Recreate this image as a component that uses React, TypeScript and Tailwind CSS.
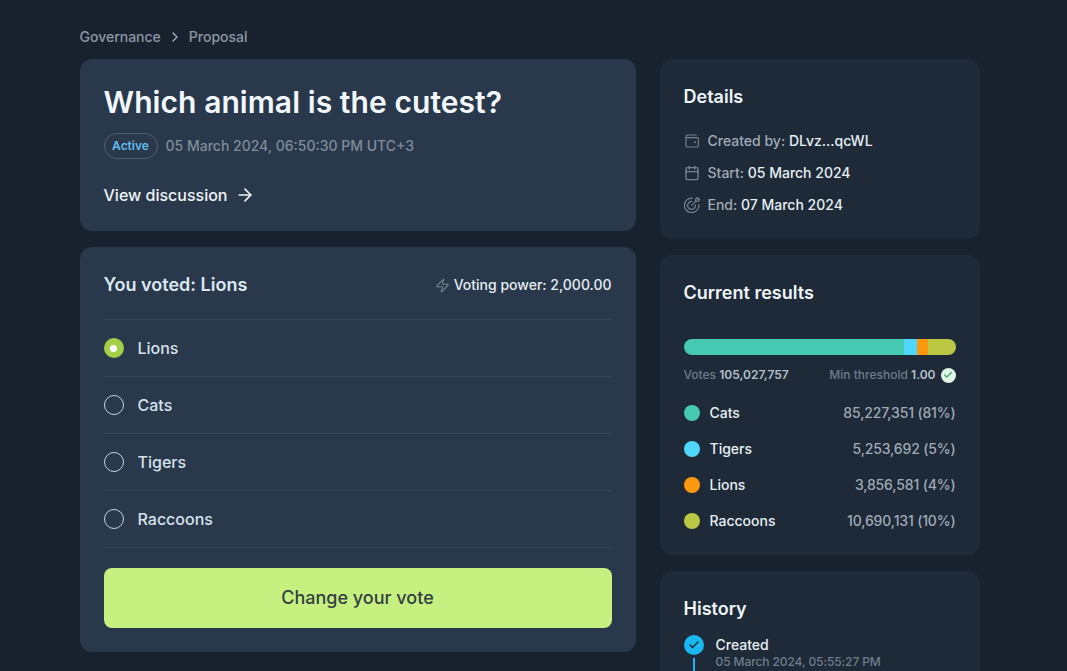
import React from 'react';
import { ArrowRight, Calendar, Check, ChevronRight, Zap } from 'lucide-react';

const options = [
  { name: 'Lions', selected: true },
  { name: 'Cats', selected: false },
  { name: 'Tigers', selected: false },
  { name: 'Raccoons', selected: false },
];

const results = [
  { name: 'Cats', value: '85,227,351 (81%)', dot: 'bg-[#46c9b3]' },
  { name: 'Tigers', value: '5,253,692 (5%)', dot: 'bg-[#4fd6fb]' },
  { name: 'Lions', value: '3,856,581 (4%)', dot: 'bg-[#fb980e]' },
  { name: 'Raccoons', value: '10,690,131 (10%)', dot: 'bg-[#bcc844]' },
];

const WalletIcon = () => (
  <svg width="16" height="16" viewBox="0 0 24 24" fill="none" stroke="currentColor" strokeWidth="1.7" strokeLinecap="round" strokeLinejoin="round">
    <path d="M18.5 3H5.5A2.5 2.5 0 0 0 3 5.5V19a2 2 0 0 0 2 2h15a1.5 1.5 0 0 0 1.5-1.5v-11A1.5 1.5 0 0 0 20 7H3" />
    <circle cx="16.5" cy="14" r="0.6" fill="currentColor" />
  </svg>
);

const TargetIcon = () => (
  <svg width="16" height="16" viewBox="1 1 22 22" fill="none" stroke="currentColor" strokeWidth="1.6" strokeLinecap="round" strokeLinejoin="round">
    <path d="M21.5 11.5A10 10 0 1 1 12.5 2.55" />
    <path d="M16.9 12A5.5 5.5 0 1 1 11.5 7" />
    <path d="M11.5 12.5L17 7" />
    <path d="M17 4v3h3l3-3h-3V1z" />
  </svg>
);

export default function App() {
  return (
    <div className="h-screen overflow-hidden bg-[#18222e] font-['Inter',sans-serif]">
      <div className="ml-[79.5px] w-[900px] pt-[28px]">
        <div className="flex h-[18px] items-center text-sm font-medium text-[#8c98a5]">
          <span>Governance</span>
          <ChevronRight size={16} className="mx-[6px] text-[#a5afb9]" />
          <span>Proposal</span>
        </div>

        <div className="mt-[13px] flex gap-6">
          <div className="flex w-[556px] flex-col gap-4">
            <div className="h-[172px] rounded-xl bg-[#29384a] px-6 pt-[24px]">
              <h1 className="text-[30px] leading-[38px] font-semibold tracking-[0.07px] text-[#f1f7fc]">Which animal is the cutest?</h1>
              <div className="mt-[12px] flex items-center gap-2">
                <span className="flex h-[26px] w-[54px] items-center justify-center rounded-full border border-[#4c6174] text-xs font-semibold text-[#63bdf0]">Active</span>
                <span className="text-sm font-medium text-[#7f8c9a]">05 March 2024, 06:50:30 PM UTC+3</span>
              </div>
              <div className="mt-[24px] flex items-center gap-[7px] text-base font-medium text-[#eef4f9]">
                <span>View discussion</span>
                <ArrowRight size={20} />
              </div>
            </div>

            <div className="h-[405px] rounded-xl bg-[#29384a] px-6">
              <div className="flex h-[73px] items-center justify-between border-b border-[#34465a] pt-[4px]">
                <span className="text-lg font-semibold text-[#dbe8f2]">You voted: Lions</span>
                <span className="flex items-center gap-[4px] text-sm font-medium text-[#e4edf4]">
                  <Zap size={15} className="text-[#6f7d8b]" />
                  Voting power: 2,000.00
                </span>
              </div>
              {options.map((option) => (
                <div key={option.name} className="flex h-[57px] items-center gap-[14px] border-b border-[#34465a]">
                  {option.selected ? (
                    <span className="flex h-5 w-5 items-center justify-center rounded-full bg-[#a3d048]">
                      <span className="h-[7px] w-[7px] rounded-full bg-white" />
                    </span>
                  ) : (
                    <span className="h-5 w-5 rounded-full border border-[#c8d2da]" />
                  )}
                  <span className="text-base font-medium text-[#d5e2ec]">{option.name}</span>
                </div>
              ))}
              <button className="mt-[20px] h-[60px] w-full rounded-lg bg-[#c6f180] text-lg font-medium text-[#333f44]">Change your vote</button>
            </div>
          </div>

          <div className="flex w-[320px] flex-col gap-4">
            <div className="h-[180px] rounded-xl bg-[#1e2a37] px-6 pt-[26px]">
              <h2 className="text-lg leading-6 font-semibold text-[#eef4f9]">Details</h2>
              <div className="mt-[22px] flex flex-col gap-[12px] text-sm font-medium text-[#9eabb7]">
                <div className="flex h-5 items-center gap-2">
                  <span className="text-[#77848f]"><WalletIcon /></span>
                  <span>Created by: <span className="text-[#e7eff5]">DLvz...qcWL</span></span>
                </div>
                <div className="flex h-5 items-center gap-2">
                  <Calendar size={16} className="text-[#77848f]" />
                  <span>Start: <span className="text-[#e7eff5]">05 March 2024</span></span>
                </div>
                <div className="flex h-5 items-center gap-2">
                  <span className="text-[#77848f]"><TargetIcon /></span>
                  <span>End: <span className="text-[#e7eff5]">07 March 2024</span></span>
                </div>
              </div>
            </div>

            <div className="h-[300px] rounded-xl bg-[#1e2a37] px-6 pt-[26px]">
              <h2 className="text-lg leading-6 font-semibold text-[#eef4f9]">Current results</h2>
              <div className="mt-[34px] flex h-4 overflow-hidden rounded-full">
                <div className="w-[220px] bg-[#46c9b3]" />
                <div className="w-[13px] bg-[#4fd6fb]" />
                <div className="w-[11px] bg-[#fb980e]" />
                <div className="flex-1 bg-[#bcc844]" />
              </div>
              <div className="mt-[12px] flex items-center justify-between text-xs font-medium text-[#6f7d8b]">
                <span>Votes <span className="font-semibold text-[#b4c0ca]">105,027,757</span></span>
                <span className="flex items-center gap-[5px]">
                  <span>Min threshold <span className="font-semibold text-[#b4c0ca]">1.00</span></span>
                  <span className="flex h-[15px] w-[15px] items-center justify-center rounded-full bg-[#dff5e6]">
                    <Check size={10} strokeWidth={3} className="text-[#3f9d6d]" />
                  </span>
                </span>
              </div>
              <div className="mt-[12px] flex flex-col">
                {results.map((result) => (
                  <div key={result.name} className="flex h-9 items-center justify-between">
                    <span className="flex items-center gap-[10px] text-sm font-medium text-[#e7eff5]">
                      <span className={`h-4 w-4 rounded-full ${result.dot}`} />
                      {result.name}
                    </span>
                    <span className="text-sm font-medium tracking-[-0.15px] text-[#9eabb7]">{result.value}</span>
                  </div>
                ))}
              </div>
            </div>

            <div className="h-[200px] rounded-xl bg-[#1e2a37] px-6 pt-[26px]">
              <h2 className="text-lg leading-6 font-semibold text-[#eef4f9]">History</h2>
              <div className="mt-[14px] flex gap-[12px]">
                <div className="flex flex-col items-center">
                  <span className="flex h-5 w-5 items-center justify-center rounded-full bg-[#19b8f0]">
                    <Check size={12} strokeWidth={3} className="text-[#1e2a37]" />
                  </span>
                  <span className="mt-[3px] h-10 w-[2px] bg-[#19b8f0]" />
                </div>
                <div>
                  <div className="text-sm leading-5 font-medium text-[#e7eff5]">Created</div>
                  <div className="text-xs leading-[14px] font-medium tracking-[-0.1px] text-[#6f7d8b]">05 March 2024, 05:55:27 PM</div>
                </div>
              </div>
            </div>
          </div>
        </div>
      </div>
    </div>
  );
}
